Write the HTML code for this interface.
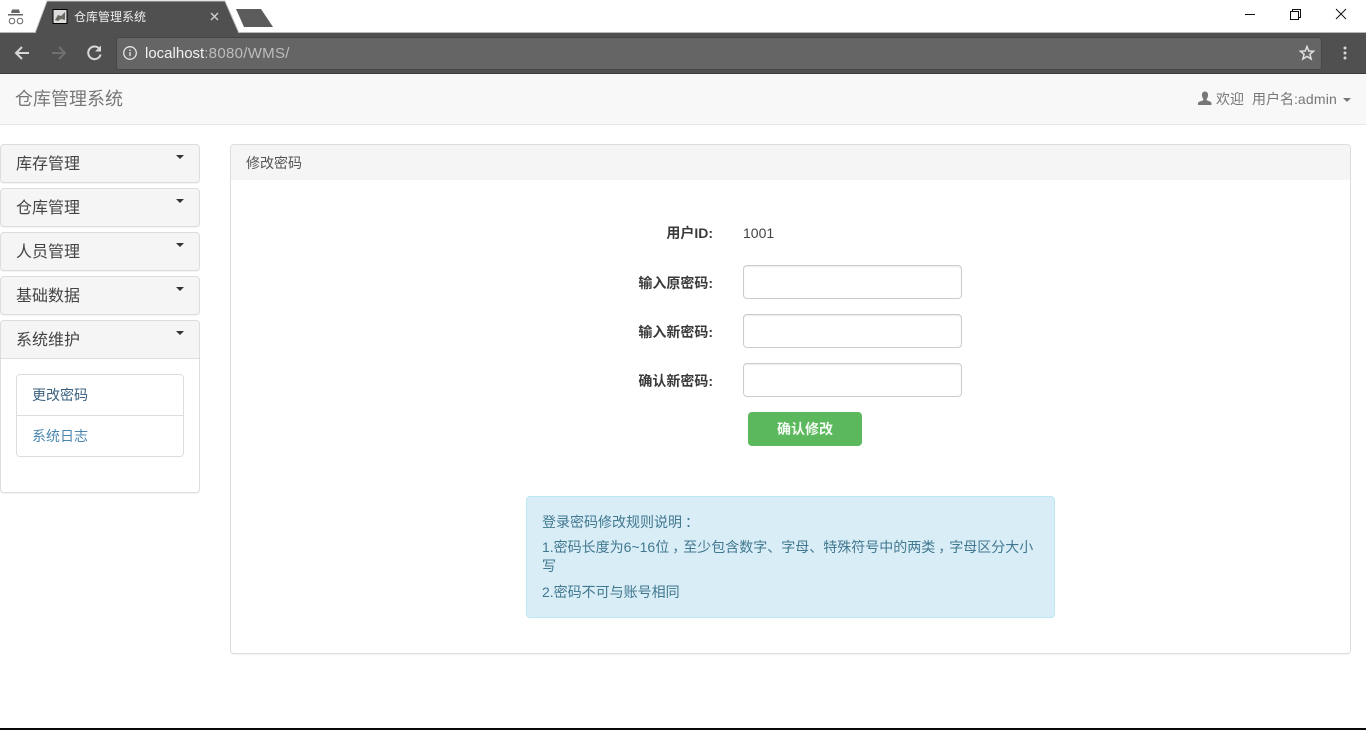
<!DOCTYPE html>
<html lang="zh-CN">
<head>
<meta charset="utf-8">
<title>仓库管理系统</title>
<style>
html,body{margin:0;padding:0;width:1366px;height:730px;overflow:hidden;background:#fff;}
body{font-family:"Liberation Sans","Noto Sans CJK SC",sans-serif;font-size:14px;color:#333;position:relative;}
.a{position:absolute;white-space:nowrap;}
.acc{position:absolute;left:0;width:198px;height:37px;background:#f5f5f5;border:1px solid #ddd;border-radius:4px;box-shadow:0 1px 1px rgba(0,0,0,.05);}
.acc span{position:absolute;left:15px;top:10px;font-size:16px;line-height:20px;color:#444;}
.caret{position:absolute;width:0;height:0;border-left:4px solid transparent;border-right:4px solid transparent;border-top:4px solid #333;}
.lab{position:absolute;width:200px;left:513px;text-align:right;font-weight:bold;font-size:14px;line-height:20px;color:#3a3a3a;}
.inp{position:absolute;left:743px;width:217px;height:32px;border:1px solid #ccc;border-radius:4px;background:#fff;box-shadow:inset 0 1px 1px rgba(0,0,0,.075);}
.p{position:relative;left:3px;}
.al{font-size:14px;line-height:20px;color:#41788f;}
</style>
</head>
<body>
<!-- browser chrome -->
<div class="a" style="left:0;top:0;width:1366px;height:33px;background:#fff;"></div>
<div class="a" style="left:0;top:32px;width:1366px;height:1px;background:#b8b8b8;"></div>
<div class="a" style="left:0;top:33px;width:1366px;height:40px;background:#505050;"></div>
<div class="a" style="left:0;top:73px;width:1366px;height:1px;background:#3a3a3a;"></div>
<svg class="a" style="left:0;top:0;" width="300" height="74" viewBox="0 0 300 74">
  <polygon points="35,33 47,1 225,1 239,33" fill="#505050"/>
  <polyline points="35,33 47,1 225,1 239,33" fill="none" stroke="#c8c8c8" stroke-width="1"/>
  <polygon points="236,9 261,9 273,27 244,27" fill="#5c5c5c"/>
  <!-- incognito -->
  <path d="M11 13 L12 9.500 L19 9.500 L20 13 Z" fill="#666"/>
  <rect x="8" y="14" width="15" height="1.500" fill="#666"/>
  <circle cx="12" cy="21" r="2.800" fill="none" stroke="#666" stroke-width="1"/>
  <circle cx="20" cy="21" r="2.800" fill="none" stroke="#666" stroke-width="1"/>
  <!-- favicon -->
  <rect x="53" y="9.500" width="14" height="14" fill="#ddd" stroke="#000" stroke-width="1"/>
  <path d="M55 20 L58 15 L61 16 L65 12 L65 20 L61 19 L58 21 Z" fill="#6a6a62"/>
  <!-- tab close -->
  <path d="M211 13 L218 20 M218 13 L211 20" stroke="#d0d0d0" stroke-width="1.400" fill="none"/>
  <!-- back -->
  <path d="M29 53 L16 53 M22 47 L16 53 L22 59" stroke="#d8d8d8" stroke-width="2" fill="none"/>
  <!-- forward -->
  <path d="M52 53 L65 53 M59 47 L65 53 L59 59" stroke="#707070" stroke-width="2" fill="none"/>
  <!-- reload -->
  <path d="M99.500 49 A6.300 6.300 0 1 0 100.600 54.500" stroke="#d8d8d8" stroke-width="2" fill="none"/>
  <path d="M101 45.500 L101 51.500 L95 51.500 Z" fill="#d8d8d8"/>
</svg>
<div class="a" style="left:74px;top:9px;font-size:12px;line-height:16px;color:#f0f0f0;">仓库管理系统</div>
<!-- omnibox -->
<div class="a" style="left:116px;top:37px;width:1204px;height:31px;background:#656565;border:1px solid #454545;border-radius:3px;"></div>
<svg class="a" style="left:122px;top:45px;" width="16" height="16" viewBox="0 0 16 16">
  <circle cx="8" cy="8" r="6.300" fill="none" stroke="#e4e4e4" stroke-width="1.300"/>
  <rect x="7.300" y="7" width="1.400" height="4.200" fill="#e4e4e4"/>
  <rect x="7.300" y="4.600" width="1.400" height="1.400" fill="#e4e4e4"/>
</svg>
<div class="a" style="left:145px;top:45px;font-size:15px;line-height:18px;color:#bdbdbd;"><span style="color:#f2f2f2;">localhost</span><span style="letter-spacing:.3px;">:8080/WMS/</span></div>
<svg class="a" style="left:1298px;top:44px;" width="18" height="18" viewBox="0 0 18 18">
  <path d="M9 2.500 L10.800 7 L15.500 7.300 L11.900 10.300 L13.100 15 L9 12.400 L4.900 15 L6.100 10.300 L2.500 7.300 L7.200 7 Z" fill="none" stroke="#e2e2e2" stroke-width="1.500"/>
</svg>
<svg class="a" style="left:1340px;top:44px;" width="10" height="18" viewBox="0 0 10 18">
  <circle cx="5" cy="4" r="1.500" fill="#d8d8d8"/><circle cx="5" cy="9" r="1.500" fill="#d8d8d8"/><circle cx="5" cy="14" r="1.500" fill="#d8d8d8"/>
</svg>
<!-- window controls -->
<svg class="a" style="left:1240px;top:4px;" width="126" height="22" viewBox="0 0 126 22">
  <rect x="5" y="10" width="10" height="1" fill="#111"/>
  <rect x="50.500" y="7.500" width="8" height="8" fill="none" stroke="#111" stroke-width="1"/>
  <path d="M52.500 7.500 V5.500 H60.500 V13.500 H58.500" fill="none" stroke="#111" stroke-width="1"/>
  <path d="M96 5 L106 15 M106 5 L96 15" stroke="#111" stroke-width="1" fill="none"/>
</svg>

<!-- navbar -->
<div class="a" style="left:0;top:74px;width:1366px;height:50px;background:#f8f8f8;border-bottom:1px solid #e7e7e7;"></div>
<div class="a" style="left:15px;top:87px;font-size:18px;line-height:24px;color:#777;">仓库管理系统</div>
<svg class="a" style="left:1197px;top:91px;" width="16" height="15" viewBox="0 0 16 15">
  <path d="M8 0.500 C10.300 0.500 11.300 2.500 11 4.800 C10.800 6.400 10.200 7.400 9.700 8 L9.700 9.200 C11.500 10 14.300 10.600 14.500 12 L14.500 14 L1 14 L1 12 C1.200 10.600 4.500 10 6.300 9.200 L6.300 8 C5.800 7.400 5.200 6.400 5 4.800 C4.700 2.500 5.700 0.500 8 0.500 Z" fill="#777"/>
</svg>
<div class="a" style="left:1216px;top:89px;font-size:14px;line-height:20px;color:#777;">欢迎</div>
<div class="a" style="left:1252px;top:89px;font-size:14px;line-height:20px;color:#777;">用户名:<span style="letter-spacing:.2px;">admin</span></div>
<div class="caret" style="left:1343px;top:98px;border-top-color:#777;"></div>

<!-- accordion -->
<div class="acc" style="top:144px;"><span>库存管理</span></div>
<div class="caret" style="left:176px;top:155px;"></div>
<div class="acc" style="top:188px;"><span>仓库管理</span></div>
<div class="caret" style="left:176px;top:199px;"></div>
<div class="acc" style="top:232px;"><span>人员管理</span></div>
<div class="caret" style="left:176px;top:243px;"></div>
<div class="acc" style="top:276px;"><span>基础数据</span></div>
<div class="caret" style="left:176px;top:287px;"></div>
<div class="a" style="left:0;top:320px;width:198px;height:171px;border:1px solid #ddd;border-radius:4px;background:#fff;box-shadow:0 1px 1px rgba(0,0,0,.05);"></div>
<div class="a" style="left:1px;top:321px;width:198px;height:37px;background:#f5f5f5;border-bottom:1px solid #ddd;border-radius:3px 3px 0 0;"></div>
<div class="a" style="left:16px;top:331px;font-size:16px;line-height:20px;color:#444;">系统维护</div>
<div class="caret" style="left:176px;top:331px;"></div>
<div class="a" style="left:16px;top:374px;width:166px;height:81px;border:1px solid #ddd;border-radius:4px;background:#fff;"></div>
<div class="a" style="left:17px;top:415px;width:166px;height:1px;background:#ddd;"></div>
<div class="a" style="left:32px;top:385px;font-size:14px;line-height:20px;color:#3a5f7d;">更改密码</div>
<div class="a" style="left:32px;top:426px;font-size:14px;line-height:20px;color:#4a85b0;">系统日志</div>

<!-- main panel -->
<div class="a" style="left:230px;top:144px;width:1119px;height:508px;border:1px solid #ddd;border-radius:4px;background:#fff;box-shadow:0 1px 1px rgba(0,0,0,.05);"></div>
<div class="a" style="left:231px;top:145px;width:1119px;height:35px;background:#f5f5f5;border-radius:3px 3px 0 0;"></div>
<div class="a" style="left:246px;top:153px;font-size:14px;line-height:20px;color:#555;">修改密码</div>

<div class="lab" style="top:223px;">用户ID:</div>
<div class="a" style="left:743px;top:223px;font-size:14px;line-height:20px;color:#444;">1001</div>
<div class="lab" style="top:273px;">输入原密码:</div>
<div class="inp" style="top:265px;"></div>
<div class="lab" style="top:322px;">输入新密码:</div>
<div class="inp" style="top:314px;"></div>
<div class="lab" style="top:371px;">确认新密码:</div>
<div class="inp" style="top:363px;"></div>
<div class="a" style="left:748px;top:412px;width:114px;height:34px;background:#5cb85c;border-radius:4px;color:#f4fbf4;text-align:center;font-size:14px;font-weight:bold;line-height:35px;">确认修改</div>

<!-- alert -->
<div class="a" style="left:526px;top:496px;width:527px;height:120px;background:#d9edf7;border:1px solid #bce8f1;border-radius:4px;"></div>
<div class="a al" style="left:542px;top:512px;">登录密码修改规则说明<span class="p">：</span></div>
<div class="a al" style="left:542px;top:537px;">1.密码长度为6~16位<span class="p">，</span>至少包含数字、字母、特殊符号中的两类<span class="p">，</span>字母区分大小</div>
<div class="a al" style="left:542px;top:556px;">写</div>
<div class="a al" style="left:542px;top:582px;">2.密码不可与账号相同</div>

<!-- bottom edge -->
<div class="a" style="left:0;top:728px;width:1366px;height:2px;background:#0a0a0a;"></div>
</body>
</html>
